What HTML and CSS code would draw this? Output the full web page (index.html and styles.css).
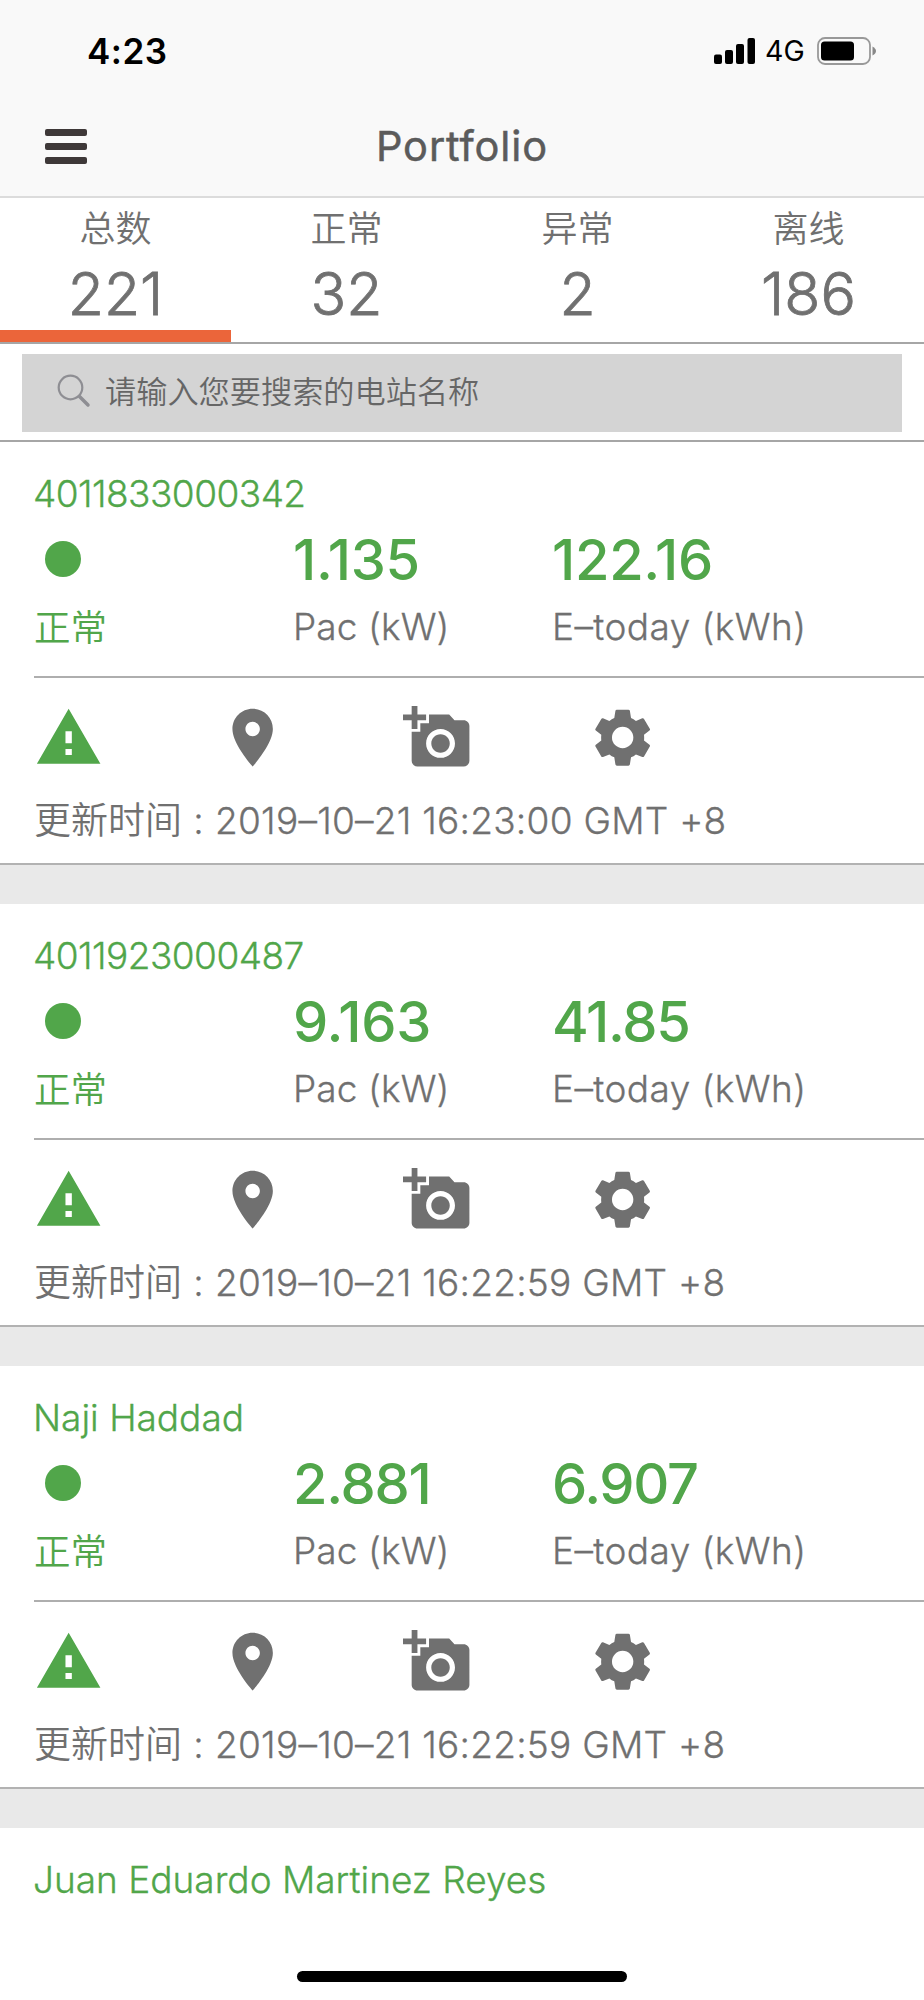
FILE: index.html
```html
<!DOCTYPE html>
<html lang="zh-CN">
<head>
<meta charset="utf-8">
<title>Portfolio</title>
<link rel="stylesheet" href="styles.css">
</head>
<body>
<svg class="defs" width="0" height="0" aria-hidden="true">
  <symbol id="warning" viewBox="0 0 24 24"><path d="M1 21h22L12 2 1 21zm12.100-3h-2.200v-2.100h2.200V18zm0-4.100h-2.200V9.800h2.200v4.100z"/></symbol>
  <symbol id="pin" viewBox="0 0 24 24"><path d="M12 2C8.130 2 5 5.130 5 9c0 5.250 7 13 7 13s7-7.750 7-13c0-3.870-3.130-7-7-7zm0 9.500c-1.380 0-2.500-1.120-2.500-2.500s1.120-2.500 2.500-2.500 2.500 1.120 2.500 2.500-1.120 2.500-2.500 2.500z"/></symbol>
  <symbol id="camera" viewBox="0 0 24 24"><path d="M3 4V1h2v3h3v2H5v3H3V6H0V4h3zm3 6V7h3V4h7l1.830 2H21c1.100 0 2 .9 2 2v12c0 1.100-.9 2-2 2H5c-1.100 0-2-.9-2-2V10h3zm7 9c2.760 0 5-2.240 5-5s-2.240-5-5-5-5 2.240-5 5 2.240 5 5 5zm-3.200-5c0 1.770 1.430 3.200 3.200 3.200s3.200-1.430 3.200-3.200-1.430-3.200-3.200-3.200-3.200 1.430-3.200 3.200z"/></symbol>
  <symbol id="gear" viewBox="0 0 24 24"><path fill-rule="evenodd" d="M10 2.300h4q.4 0 .5.400l.4 2.500q.9.300 1.700 1l2.200-.9q.4-.1.600.2l2 3.400q.2.300-.1.600l-1.900 1.500q.1 1 0 2l1.900 1.500q.3.300.1.600l-2 3.400q-.2.300-.6.200l-2.200-.9q-.8.700-1.700 1l-.4 2.500q-.1.400-.5.400H10q-.4 0-.5-.4l-.4-2.500q-.9-.3-1.700-1l-2.200.9q-.4.100-.6-.2l-2-3.400q-.2-.3.100-.6l1.900-1.500q-.1-1 0-2L2.700 9.500q-.3-.3-.1-.6l2-3.400q.2-.3.600-.2l2.200.9q.8-.7 1.700-1l.4-2.500q.1-.4.500-.4zM12 8.250a3.700 3.700 0 1 0 0 7.400a3.700 3.700 0 0 0 0-7.400z"/></symbol>
</svg>
<div class="screen">
  <header class="header">
    <div class="status">
      <span class="time">4:23</span>
      <span class="signals">
        <svg class="bars" viewBox="0 0 41 26"><rect y="16.500" width="8" height="9.500" rx="2"/><rect x="11" y="12" width="8" height="14" rx="2"/><rect x="22" y="6" width="8" height="20" rx="2"/><rect x="33.500" width="7.500" height="26" rx="2"/></svg>
        <span class="network">4G</span>
        <svg class="battery" viewBox="0 0 60 28"><rect x="1" y="1" width="52" height="26" rx="7" fill="none" stroke="#999" stroke-width="1.800"/><rect x="4" y="4.500" width="33" height="19" rx="3.500"/><path d="M55.500 9.500q3.500 2 3.500 4.500t-3.500 4.500z" fill="#888"/></svg>
      </span>
    </div>
    <div class="navbar">
      <div class="menu"><i></i><i></i><i></i></div>
      <h1 class="title">Portfolio</h1>
    </div>
  </header>
  <nav class="tabs">
    <div class="tab active"><span class="tab-label">总数</span><span class="tab-count">221</span></div>
    <div class="tab"><span class="tab-label">正常</span><span class="tab-count">32</span></div>
    <div class="tab"><span class="tab-label">异常</span><span class="tab-count">2</span></div>
    <div class="tab"><span class="tab-label">离线</span><span class="tab-count">186</span></div>
  </nav>
  <div class="search">
    <div class="search-box">
      <svg class="search-icon" viewBox="0 0 34 34" fill="none"><circle cx="13.500" cy="13.500" r="11.800" stroke="#8e8e93" stroke-width="2.200"/><path d="M22.500 22.500l8.500 8.500" stroke="#8e8e93" stroke-width="3.500" stroke-linecap="round"/></svg>
      <span class="placeholder">请输入您要搜索的电站名称</span>
    </div>
  </div>
  <main id="stations">
    <article class="card">
      <h2 class="name">4011833000342</h2>
      <div class="metrics">
        <div class="cell"><div class="dot"></div><div class="label ok">正常</div></div>
        <div class="cell"><div class="value">1.135</div><div class="label">Pac (kW)</div></div>
        <div class="cell"><div class="value">122.16</div><div class="label wide">E–today (kWh)</div></div>
      </div>
      <div class="actions"><svg class="ok"><use href="#warning"/></svg><svg><use href="#pin"/></svg><svg><use href="#camera"/></svg><svg><use href="#gear"/></svg></div>
      <div class="updated"><span class="cjk">更新时间</span><span class="colon">:</span><span class="stamp">2019–10–21 16:23:00 GMT +8</span></div>
    </article>
    <article class="card">
      <h2 class="name">4011923000487</h2>
      <div class="metrics">
        <div class="cell"><div class="dot"></div><div class="label ok">正常</div></div>
        <div class="cell"><div class="value">9.163</div><div class="label">Pac (kW)</div></div>
        <div class="cell"><div class="value tight">41.85</div><div class="label wide">E–today (kWh)</div></div>
      </div>
      <div class="actions"><svg class="ok"><use href="#warning"/></svg><svg><use href="#pin"/></svg><svg><use href="#camera"/></svg><svg><use href="#gear"/></svg></div>
      <div class="updated"><span class="cjk">更新时间</span><span class="colon">:</span><span class="stamp">2019–10–21 16:22:59 GMT +8</span></div>
    </article>
    <article class="card">
      <h2 class="name latin">Naji Haddad</h2>
      <div class="metrics">
        <div class="cell"><div class="dot"></div><div class="label ok">正常</div></div>
        <div class="cell"><div class="value tight">2.881</div><div class="label">Pac (kW)</div></div>
        <div class="cell"><div class="value tight">6.907</div><div class="label wide">E–today (kWh)</div></div>
      </div>
      <div class="actions"><svg class="ok"><use href="#warning"/></svg><svg><use href="#pin"/></svg><svg><use href="#camera"/></svg><svg><use href="#gear"/></svg></div>
      <div class="updated"><span class="cjk">更新时间</span><span class="colon">:</span><span class="stamp">2019–10–21 16:22:59 GMT +8</span></div>
    </article>
    <article class="card last"><h2 class="name latin">Juan Eduardo Martinez Reyes</h2></article>
  </main>
  <div class="home-indicator"></div>
</div>
</body>
</html>
```
FILE: styles.css
```css
* { box-sizing: border-box; }
body { margin: 0; background: #fff; }
.defs { display: block; }
.screen {
  position: relative;
  width: 924px;
  height: 2000px;
  overflow: hidden;
  color: #707070;
  font-family: Inter, "Noto Sans CJK SC", sans-serif;
  font-weight: 350;
}
.header { height: 198px; background: #f9f9f9; border-bottom: 2px solid #dcdcdc; }
.status {
  display: flex;
  justify-content: space-between;
  align-items: center;
  height: 100px;
  padding: 1px 47px 0 87px;
  color: #000;
}
.time { font-size: 35px; font-weight: 600; letter-spacing: 0.5px; }
.signals { display: flex; align-items: center; }
.bars { width: 41px; height: 26px; }
.network { margin-left: 10px; width: 52px; font-size: 28.5px; font-weight: 400; line-height: 28px; padding-top: 1px; }
.battery { width: 60px; height: 28px; }
.navbar {
  display: grid;
  grid-template-columns: 1fr auto 1fr;
  align-items: center;
  height: 93px;
  padding: 0 45px;
}
.menu { display: flex; flex-direction: column; gap: 7px; width: 42px; }
.menu i { height: 7px; border-radius: 2px; background: #3e3838; }
.title { margin: -2px 0 0; color: #5b5b5b; font-size: 41.5px; font-weight: 400; line-height: 50px; letter-spacing: 0.9px; -webkit-text-stroke: 0.5px; }
.tabs { display: grid; grid-template-columns: repeat(4, 1fr); height: 146px; border-bottom: 2px solid #a6a6a6; }
.tab { display: flex; flex-direction: column; align-items: center; border-bottom: 12px solid transparent; }
.tab.active { border-color: #eb653a; }
.tab-label { margin-top: 7px; font-size: 36px; line-height: 48px; }
.tab-count { margin-top: 6px; font-size: 59px; line-height: 70px; -webkit-text-stroke: 0.8px; }
.search { height: 98px; padding: 10px 22px 7px; border-bottom: 2px solid #a6a6a6; }
.search-box { display: flex; align-items: center; height: 78px; padding-left: 35px; background: #d4d4d4; }
.search-icon { width: 34px; height: 34px; margin-top: -4px; }
.placeholder { margin: -2px 0 0 14px; color: #666; font-size: 31.2px; line-height: 40px; }
.card { height: 462px; padding-left: 34px; border-bottom: 39px solid #e9e9e9; }
.card.last { border: 0; }
.name { margin: 0 0 0 -1px; padding-top: 30px; height: 86px; color: #51a64a; font-size: 37px; font-weight: 350; line-height: 44px; letter-spacing: -0.55px; -webkit-text-stroke: 0.3px; }
.name.latin { letter-spacing: 0; }
.metrics { display: grid; grid-template-columns: 259px 259px 1fr; height: 150px; border-bottom: 2px solid #aeaeae; }
.value { height: 62px; padding-top: 1px; color: #51a64a; font-size: 56px; font-weight: 500; line-height: 62px; letter-spacing: -0.3px; }
.value.tight { letter-spacing: -1.3px; }
.dot { width: 36px; height: 36px; margin: 13px 0 13px 10.5px; border-radius: 50%; background: #51a64a; }
.label { margin-top: 15px; font-size: 37px; line-height: 44px; letter-spacing: 0.1px; -webkit-text-stroke: 0.3px; }
.label.wide { letter-spacing: 0.42px; }
.actions { display: grid; grid-template-columns: repeat(5, 184.8px); height: 109px; margin-left: -0.5px; padding-top: 25px; }
.actions svg { width: 69.3px; height: 69.3px; fill: #707070; }
.actions .ok { fill: #51a64a; }
.label.ok { margin-top: 29px; color: #51a64a; font-size: 36.5px; -webkit-text-stroke: 0; }
.updated { display: flex; height: 78px; margin-left: -34px; padding: 12px 0 0 34px; border-bottom: 2px solid #b2b2b2; font-size: 37px; line-height: 44px; }
.colon { width: 33px; text-align: center; -webkit-text-stroke: 0.3px; }
.stamp { letter-spacing: 0.25px; -webkit-text-stroke: 0.3px; }
.home-indicator { position: absolute; left: 297px; top: 1971px; width: 330px; height: 11px; border-radius: 6px; background: #000; }
```
